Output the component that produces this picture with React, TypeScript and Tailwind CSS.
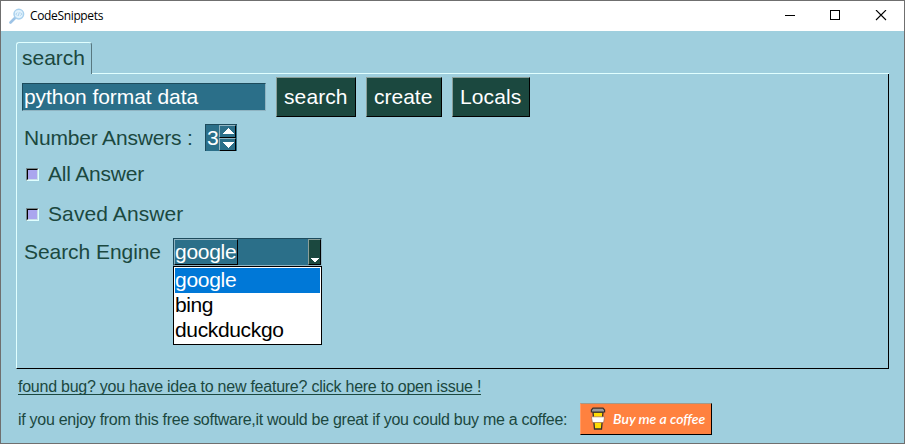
import type { ReactNode } from "react";

const engines = [
  { name: "google", className: "bg-[#0078d7] tracking-[-0.3px] text-white" },
  { name: "bing", className: "tracking-[-0.4px]" },
  { name: "duckduckgo", className: "tracking-[-0.35px]" },
];

function PushButton({ children, className }: { children: ReactNode; className: string }) {
  return (
    <button
      className={`h-10 shrink-0 border border-t-[#8b9f99] border-r-black border-b-black border-l-[#8b9f99] bg-[#1b483f] pl-[7px] text-left leading-[38px] text-white ${className}`}
    >
      {children}
    </button>
  );
}

function CheckRow({ label, className }: { label: string; className: string }) {
  return (
    <label className="flex h-10 items-center">
      <span className="block size-[13px] border border-t-[#76868a] border-r-[#e0ffff] border-b-[#e0ffff] border-l-[#76868a]">
        <span className="block size-[11px] border border-t-black border-r-[#c9dfe8] border-b-[#c9dfe8] border-l-black bg-[#aaa6ee]" />
      </span>
      <span className={`ml-[9px] ${className}`}>{label}</span>
    </label>
  );
}

function SpinArrow({ up }: { up?: boolean }) {
  return (
    <span className="block h-[13px] w-[17px] border border-t-[#8fb4c2] border-r-black border-b-black border-l-[#8fb4c2] bg-[#2b6f89]">
      <svg width="15" height="11" shapeRendering="crispEdges" className="block" fill="#fff">
        <path d={up ? "M2 8H14L8 2Z" : "M2 3H14L8 9Z"} />
      </svg>
    </span>
  );
}

function CoffeeCup() {
  return (
    <svg width="16" height="24" viewBox="0 0 16 24" className="block">
      <path d="M3 5H13L11.5 22H4.5Z" fill="#ffdd05" stroke="#38302c" strokeWidth="1.3" />
      <path d="M3 1.2H13L14.6 3V5H1.4V3Z" fill="#9b9b9b" stroke="#38302c" strokeWidth="1.2" />
      <path d="M1.4 9.8H14.6L13.6 15.5H2.4Z" fill="#fff" stroke="#a06a48" strokeWidth="0.7" />
    </svg>
  );
}

export default function App() {
  return (
    <div className="flex h-[444px] w-[905px] flex-col overflow-hidden border border-[#6f6f6f] bg-[#9fcfde] font-['Liberation_Sans',sans-serif] whitespace-nowrap text-[#1b483f]">
      <header className="flex h-[30px] shrink-0 items-center bg-white text-black">
        <svg width="16" height="16" viewBox="0 0 16 16" className="ml-2" fill="none">
          <path d="M1.5 14.5L6 10" stroke="#9dc3e6" strokeWidth="2.6" strokeLinecap="round" />
          <circle cx="9.8" cy="6.1" r="4.8" fill="#e2f2fc" stroke="#a9d1ee" strokeWidth="1.5" />
          <path d="M8.2 4.6L6.8 6.1L8.2 7.6M11.4 4.6L12.8 6.1L11.4 7.6M10.3 4.3L9.3 7.9" stroke="#9cc6e8" strokeWidth="0.8" />
        </svg>
        <span className="ml-[5px] font-['Open_Sans',sans-serif] text-[12px] tracking-[-0.35px]">CodeSnippets</span>
        <svg width="106" height="12" shapeRendering="crispEdges" className="mr-[14px] ml-auto" fill="none" stroke="#000">
          <path d="M1 5.5H11" />
          <path d="M46.5 0.5H55.5V9.5H46.5Z" />
          <path d="M92 0L102 10M102 0L92 10" shapeRendering="auto" strokeWidth="1.1" />
        </svg>
      </header>

      <main className="flex flex-1 flex-col pl-[15px] text-[21px] leading-6">
        <div className="mt-[11px] flex h-8 shrink-0">
          <div className="h-8 w-[76px] rounded-t-[3px] border-t border-r border-l border-t-[#e0ffff] border-r-[#587880] border-l-[#e0ffff] pt-[3px] pl-[5px]">
            search
          </div>
          <div className="mt-[31px] h-px w-[797px] bg-[#e0ffff]" />
        </div>

        <section className="flex h-[295px] w-[873px] shrink-0 flex-col border-r border-b border-l border-r-black border-b-black border-l-[#e0ffff] pl-[5px]">
          <div className="flex h-[43px] shrink-0 pt-[3px]">
            <div className="mt-[6px] h-7 w-[244px] border border-t-[#1d4b5c] border-r-[#8fb4c2] border-b-[#8fb4c2] border-l-[#1d4b5c] bg-[#2b6f89] pl-px leading-[26px] tracking-[-0.06px] text-white">
              python format data
            </div>
            <div className="ml-[10px] flex gap-[10px]">
              <PushButton className="w-20 tracking-[0.1px]">search</PushButton>
              <PushButton className="w-[76px]">create</PushButton>
              <PushButton className="w-[78px] tracking-[0.1px]">Locals</PushButton>
            </div>
          </div>

          <div className="mt-[7px] flex h-7 shrink-0 pl-[2px]">
            <span className="w-[181px] leading-[28px] tracking-[-0.18px]">Number Answers :</span>
            <div className="flex h-[27px] w-8 border border-r-0 border-b-0 border-t-[#1d4b5c] border-l-[#1d4b5c] bg-[#2b6f89]">
              <span className="w-[14px] shrink-0 pl-px leading-[26px] text-white">3</span>
              <div className="-ml-px">
                <SpinArrow up />
                <SpinArrow />
              </div>
            </div>
          </div>

          <div className="mt-[2px] flex h-20 shrink-0 flex-col pl-1">
            <CheckRow label="All Answer" className="tracking-[-0.2px]" />
            <CheckRow label="Saved Answer" className="tracking-[0.1px]" />
          </div>

          <div className="relative mt-1 flex h-7 shrink-0 pl-[2px]">
            <span className="w-[149px] leading-[28px] tracking-[-0.06px]">Search Engine</span>
            <div className="flex h-7 w-[149px] border border-t-[#1d4b5c] border-r-[#8fb4c2] border-b-[#8fb4c2] border-l-[#1d4b5c] bg-[#2b6f89] text-white">
              <span className="w-16 border border-t-[#8fb4c2] border-r-black border-b-black border-l-[#8fb4c2] leading-[24px] tracking-[-0.3px]">google</span>
              <span className="ml-auto w-[13px] border border-t-[#8b9f99] border-r-black border-b-black border-l-[#8b9f99] bg-[#1b483f]">
                <svg width="11" height="24" shapeRendering="crispEdges" className="block" fill="#fff">
                  <path d="M1 18H10L5.5 22.5Z" />
                </svg>
              </span>
            </div>
            <ul className="absolute top-7 left-[151px] h-[79px] w-[149px] border border-black bg-white p-px text-black">
              {engines.map((engine) => (
                <li key={engine.name} className={`h-[25px] leading-[23px] ${engine.className}`}>
                  {engine.name}
                </li>
              ))}
            </ul>
          </div>
        </section>

        <footer className="pl-[2px] text-[16px]">
          <div className="flex h-[34px] pt-[9px]">
            <a className="h-[17px] border-b border-[#1b483f] leading-[18px] tracking-[-0.243px]">
              found bug? you have idea to new feature? click here to open issue !
            </a>
          </div>
          <div className="flex h-8">
            <span className="w-[562px] shrink-0 leading-[34px] tracking-[-0.287px]">
              if you enjoy from this free software,it would be great if you could buy me a coffee:
            </span>
            <button className="flex h-8 w-[132px] shrink-0 items-center border border-t-[#a19b8c] border-r-black border-b-black border-l-[#ff9a65] bg-[#ff813f] pl-[9px] text-white">
              <CoffeeCup />
              <span className="ml-[7px] font-['Lato',cursive] text-[14px] font-semibold italic">Buy me a coffee</span>
            </button>
          </div>
        </footer>
      </main>
    </div>
  );
}
